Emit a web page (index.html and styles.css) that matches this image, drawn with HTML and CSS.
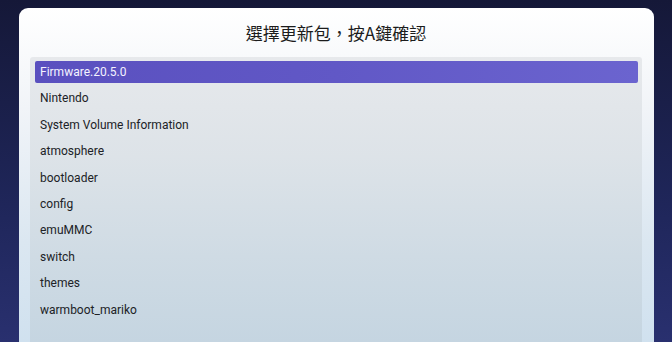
FILE: index.html
```html
<!DOCTYPE html>
<html lang="zh-Hant">

<head>
    <meta charset="UTF-8">
    <meta name="viewport" content="width=device-width, initial-scale=1.0">
    <title>選擇更新包</title>
    <link rel="stylesheet" href="styles.css">
</head>

<body>
    <div class="panel">
        <h2 class="title">選擇更新包，按A鍵確認</h2>
        <ul class="file-list">
            <li class="selected">Firmware.20.5.0</li>
            <li>Nintendo</li>
            <li>System Volume Information</li>
            <li>atmosphere</li>
            <li>bootloader</li>
            <li>config</li>
            <li>emuMMC</li>
            <li>switch</li>
            <li>themes</li>
            <li>warmboot_mariko</li>
        </ul>
    </div>
</body>

</html>
```

FILE: styles.css
```css
html,
body {
    height: 100%;
}

body {
    margin: 0;
    overflow: hidden;
    display: flex;
    flex-direction: column;
    font-family: Roboto, "Noto Sans CJK TC", sans-serif;
    background: linear-gradient(180deg, #151838 0%, #1f265a 60%, #29306f 100%);
}

.panel {
    flex: 1;
    display: flex;
    flex-direction: column;
    margin: 8px 18px 0 19px;
    padding: 0 12px 0 11px;
    border-radius: 9px 9px 0 0;
    background: linear-gradient(180deg, #ffffff 0%, #f1f4f8 30%, #dbe7f1 70%, #d0e1ef 100%);
}

.title {
    margin: 0;
    height: 46px;
    padding-top: 3px;
    box-sizing: border-box;
    display: flex;
    align-items: center;
    justify-content: center;
    font-family: "Noto Sans CJK TC", "Noto Sans", sans-serif;
    font-size: 17px;
    font-weight: 400;
    color: #1c1c1c;
}

.file-list {
    flex: 1;
    list-style: none;
    margin: 3px 0 0 0;
    padding: 4px 4px 0 5px;
    border-radius: 3px 3px 0 0;
    background: linear-gradient(180deg, #e7e9ec 0%, #dde3e8 35%, #cfdbe4 70%, #c5d5e1 100%);
}

.file-list li {
    height: 26.4px;
    line-height: 22px;
    padding-left: 5px;
    font-size: 12px;
    color: #202226;
}

.file-list li.selected {
    height: 22px;
    margin-bottom: 4.4px;
    border-radius: 2px;
    color: #f4f3ff;
    background: linear-gradient(90deg, #5a50bf 0%, #6158c6 50%, #6b64cf 100%);
}
```
